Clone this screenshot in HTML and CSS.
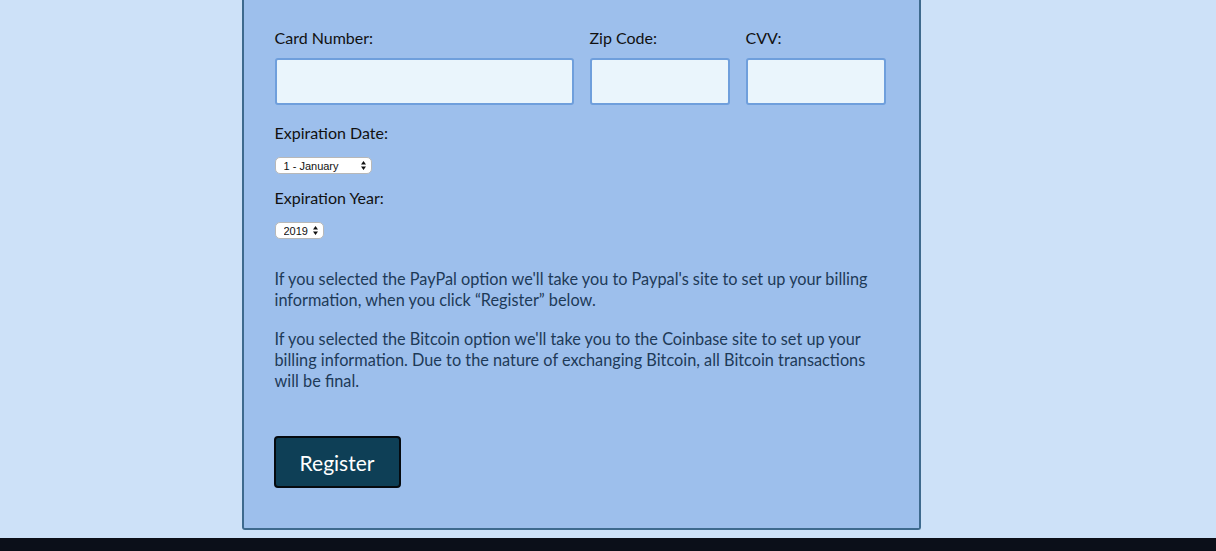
FILE: index.html
```html
<!DOCTYPE html>
<html>
<head>
<meta charset="utf-8">
<link rel="stylesheet" href="styles.css">
</head>
<body>
<div class="page">
  <div class="stage">
    <main class="card">
      <div class="row">
        <div class="field field-card">
          <label class="label">Card Number:</label>
          <input class="input" type="text">
        </div>
        <div class="field field-small">
          <label class="label">Zip Code:</label>
          <input class="input" type="text">
        </div>
        <div class="field field-small">
          <label class="label">CVV:</label>
          <input class="input" type="text">
        </div>
      </div>
      <div class="sel-field">
        <label class="label">Expiration Date:</label>
        <span class="select-wrap select-month">
          <select class="select"><option>1 - January</option></select>
          <span class="arrows"><svg width="5" height="9" viewBox="0 0 5 9"><path d="M2.5 0L5 3.5H0Z M2.5 9L5 5.5H0Z" fill="#111"/></svg></span>
        </span>
      </div>
      <div class="sel-field">
        <label class="label">Expiration Year:</label>
        <span class="select-wrap select-year">
          <select class="select"><option>2019</option></select>
          <span class="arrows"><svg width="5" height="9" viewBox="0 0 5 9"><path d="M2.5 0L5 3.5H0Z M2.5 9L5 5.5H0Z" fill="#111"/></svg></span>
        </span>
      </div>
      <div class="notes">
        <p>If you selected the PayPal option we'll take you to Paypal's site to set up your billing information, when you click “Register” below.</p>
        <p>If you selected the Bitcoin option we'll take you to the Coinbase site to set up your billing information. Due to the nature of exchanging Bitcoin, all Bitcoin transactions will be final.</p>
      </div>
      <button class="btn" type="button">Register</button>
    </main>
  </div>
  <footer class="footer"></footer>
</div>
</body>
</html>
```
FILE: styles.css
```css
html, body {
  margin: 0;
  padding: 0;
  height: 100%;
}
body {
  background: #cde1f8;
  font-family: "Lato", "Noto Sans", sans-serif;
  overflow: hidden;
}
.page {
  display: flex;
  flex-direction: column;
  height: 551px;
}
.stage {
  display: flex;
  justify-content: center;
  padding-right: 54px;
}
.card {
  box-sizing: border-box;
  width: 679px;
  height: 530px;
  background: #9dbfec;
  border: 2px solid #3e6a8e;
  border-top: none;
  border-radius: 0 0 3px 3px;
  padding: 28px 32px 0 31px;
  display: flex;
  flex-direction: column;
  align-items: flex-start;
}
.row {
  display: flex;
  gap: 16px;
  width: 611px;
}
.field {
  display: flex;
  flex-direction: column;
  flex-shrink: 0;
}
.field-card { width: 299px; }
.field-small { width: 140px; }
.label {
  font-size: 16px;
  color: #111;
  line-height: 20px;
  margin-bottom: 10px;
}
.input {
  box-sizing: border-box;
  height: 47px;
  width: 100%;
  background: #eaf5fc;
  border: 2px solid #6f9fdc;
  border-radius: 3px;
  margin: 0;
}
.sel-field {
  display: flex;
  flex-direction: column;
  align-items: flex-start;
  margin-top: 18px;
}
.sel-field + .sel-field { margin-top: 14px; }
.sel-field .label { margin-bottom: 14px; }
.select-wrap {
  position: relative;
  display: block;
  height: 17px;
}
.select {
  -webkit-appearance: none;
  appearance: none;
  display: block;
  box-sizing: border-box;
  height: 17px;
  background: #fff;
  border: 1px solid #b8b8b8;
  border-radius: 5px;
  font-family: "Liberation Sans", Arial, sans-serif;
  font-size: 11px;
  color: #111;
  padding: 0 0 0 8px;
  margin: 0;
}
.select-month .select { width: 97px; }
.select-year .select { width: 49px; }
.arrows {
  position: absolute;
  right: 6px;
  top: 4px;
  line-height: 0;
  pointer-events: none;
}
.notes {
  margin-top: 29px;
  width: 611px;
}
.notes p {
  margin: 0 0 18px;
  font-size: 16.3px;
  line-height: 21px;
  color: #1d3a58;
}
.btn {
  margin-top: 27px;
  box-sizing: border-box;
  width: 127px;
  height: 52px;
  margin-left: -1px;
  background: #0e3f56;
  border: 2px solid #050a0f;
  border-radius: 4px;
  color: #fff;
  font-family: "Lato", "Noto Sans", sans-serif;
  font-size: 21px;
}
.footer {
  margin-top: 8px;
  flex: 1;
  background: #0b0f19;
}
```
